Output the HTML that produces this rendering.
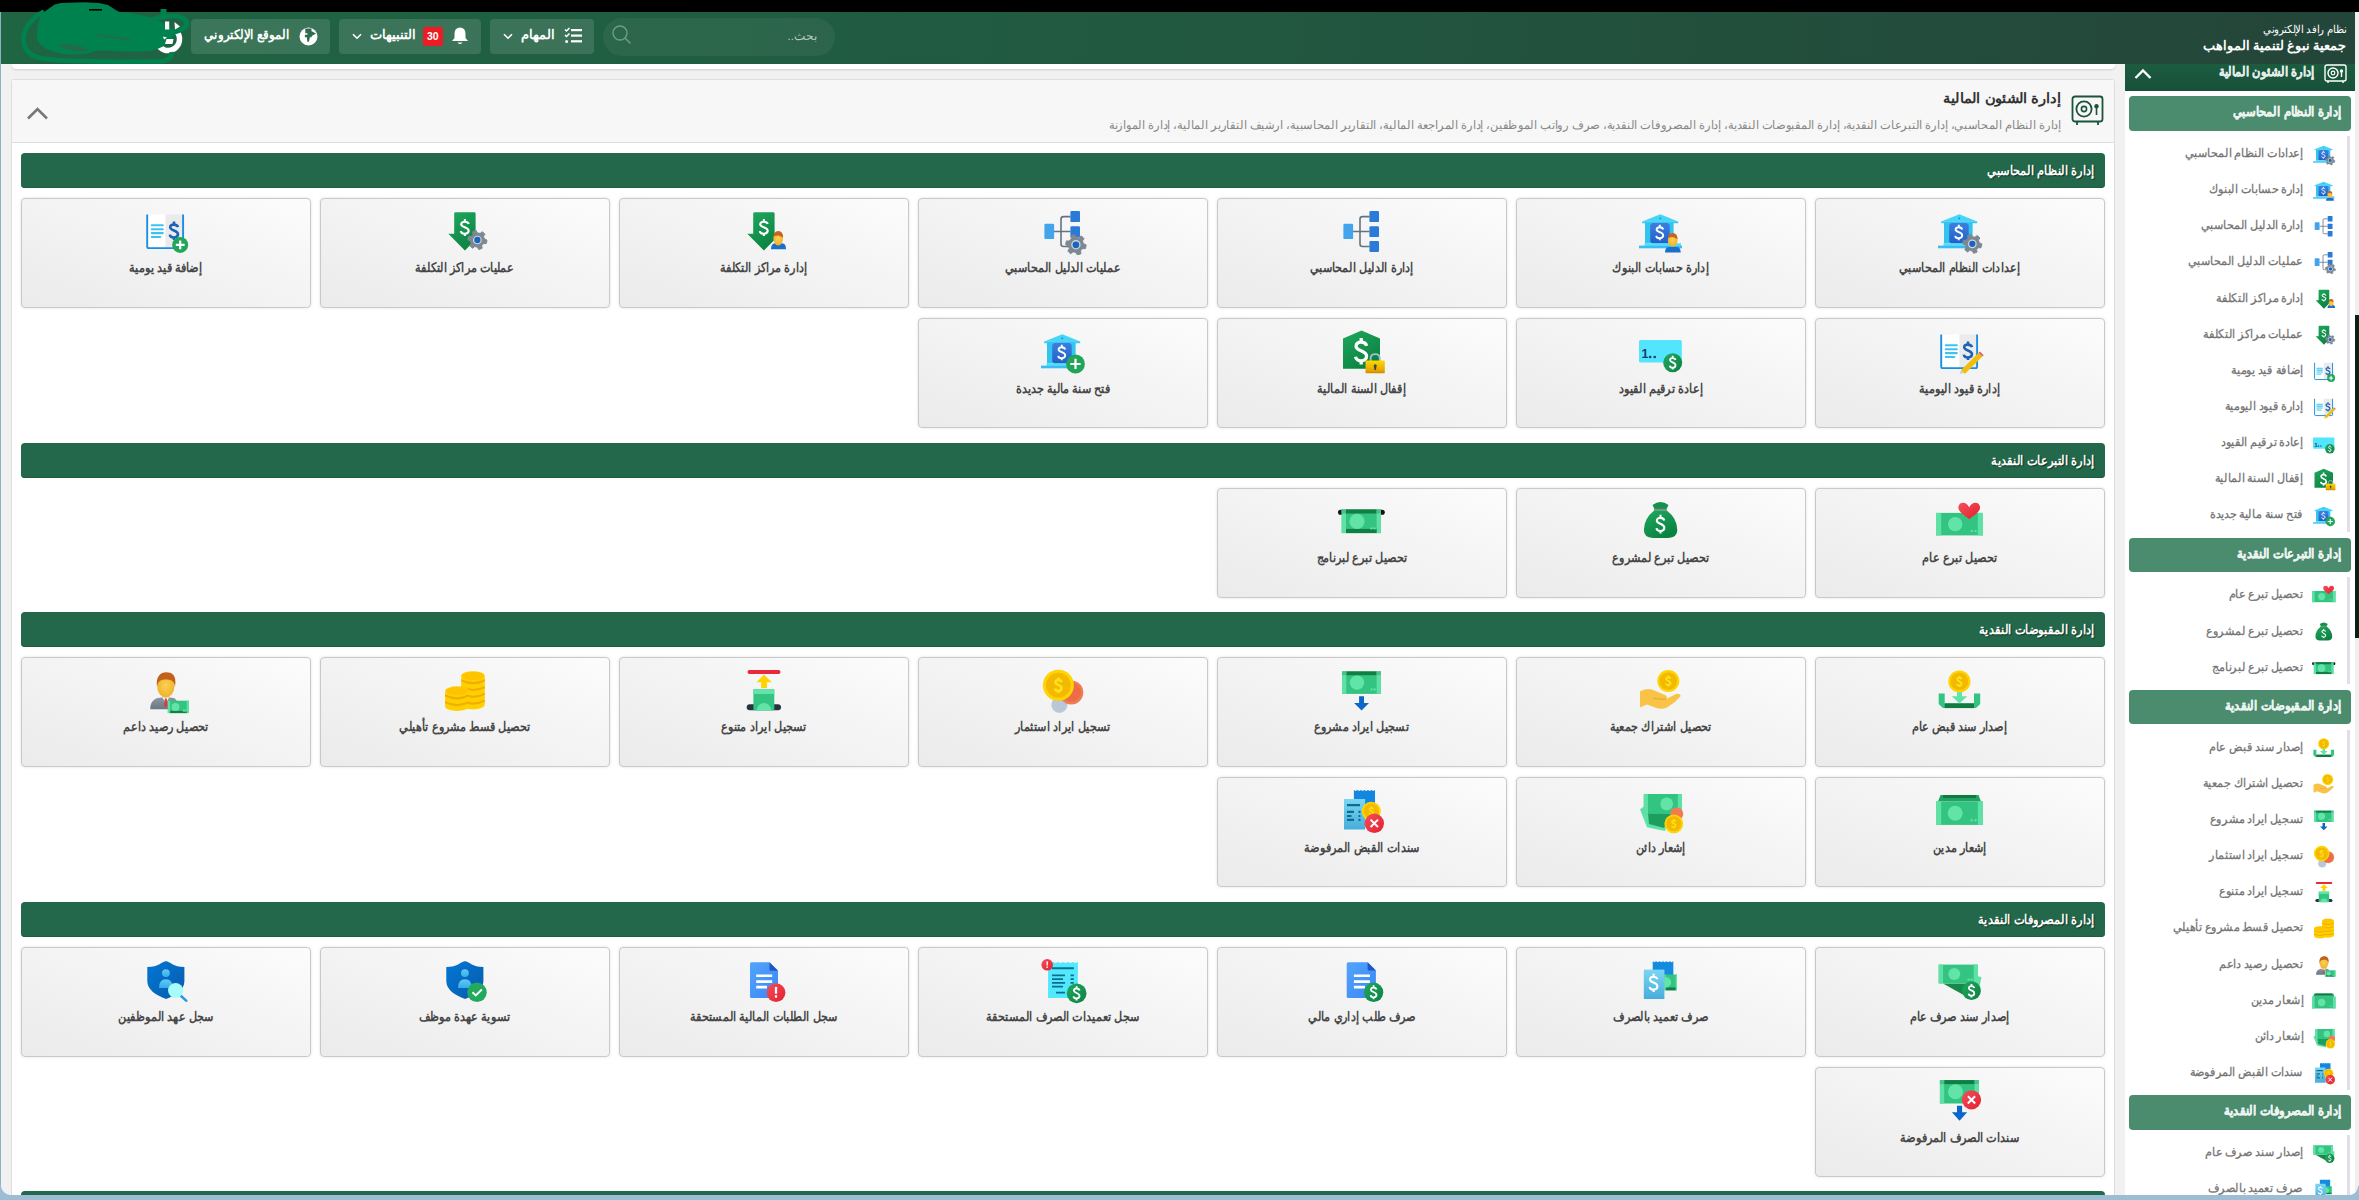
<!DOCTYPE html><html lang="ar"><head><meta charset="utf-8"><title>rafed</title><style>*{box-sizing:border-box;margin:0;padding:0}
html,body{width:2359px;height:1200px;overflow:hidden;background:#f1f1f1;font-family:"Liberation Sans", sans-serif;position:relative}
#root{position:relative;width:2359px;height:1200px;overflow:hidden}
.abs{position:absolute}
#topblack{left:0;top:0;width:2359px;height:12px;background:#000}
#lline{left:0;top:12px;width:1px;height:1188px;background:#8fb0c6}
#bstrip{left:0;top:1195px;width:2359px;height:5px;background:#9cbdd4}
#rstrip{left:2355px;top:12px;width:4px;height:1183px;background:#efefef}
#thumb{left:2355px;top:314.5px;width:4px;height:323px;background:#0b1f12}
#hdr{left:1px;top:12px;width:2354px;height:51.6px;background:linear-gradient(to right,#1f6542 0%,#215a41 45%,#244539 100%)}
.hbtn{position:absolute;top:18.9px;height:35px;border-radius:4px;background:rgba(255,255,255,0.12);color:#fff;font-size:13px;font-weight:bold;direction:rtl}
.hbtn span{position:absolute;white-space:nowrap}
#search{left:603px;top:18px;width:232px;height:38px;border-radius:19px;background:rgba(255,255,255,0.05)}
#search .ph{position:absolute;right:18px;top:11px;color:#b9cbbf;font-size:11.5px;direction:rtl}
#search .mag{position:absolute;left:9px;top:7.2px;width:20px;height:20px}
#topcard{left:11.5px;top:63.6px;width:2103px;height:5.7px;background:#fff;border-radius:0 0 4px 4px;box-shadow:0 1px 2px rgba(0,0,0,0.15)}
#panel{left:11.3px;top:79.4px;width:2103.3px;height:1125px;background:#fff;border:1px solid #dedede;border-radius:3px}
#phead{left:12.3px;top:80.4px;width:2101.3px;height:63px;background:#f7f7f7;border-bottom:1px solid #dedede}
.ptitle{right:298px;top:90px;color:#333;font-size:14px;font-weight:bold;direction:rtl;white-space:nowrap;transform:scaleX(1.046);transform-origin:right center}
.pdesc{right:298px;top:117.7px;color:#888;font-size:12px;direction:rtl;white-space:nowrap;transform:scaleX(.955);transform-origin:right center}
.bar{position:absolute;left:21px;width:2084px;height:35.3px;border-radius:4px;background:#23684a;box-shadow:inset 0 -1px 0 #1c5e3e}
.bar span{position:absolute;right:10px;top:10px;color:#fff;font-weight:bold;font-size:12.5px;white-space:nowrap;direction:rtl;text-shadow:1px 1px 1px rgba(0,0,0,0.5);transform:scaleX(.878);transform-origin:right center}
.card{position:absolute;width:289.5px;height:110.2px;border:1px solid #c9c9c9;border-radius:4px;background:linear-gradient(to top right,#ebebeb 0%,#f3f3f3 50%,#fcfcfc 100%);box-shadow:0 0 3px rgba(0,0,0,0.12)}
.card svg{position:absolute;left:119.75px;top:8px;width:48px;height:48px;overflow:visible}
.card span{position:absolute;left:0;right:0;top:61.5px;text-align:center;color:#474747;font-weight:bold;font-size:12.5px;white-space:nowrap;direction:rtl;transform:scaleX(.862)}
#side{left:2124.75px;top:63.6px;width:230.25px;height:1136.4px;background:#fff}
#stitle{left:2124.75px;top:63.6px;width:230.25px;height:27px;background:linear-gradient(to bottom,#1c5c3f,#17503a)}
#stitle span{position:absolute;right:40px;top:0.5px;color:#e6eeea;-webkit-text-stroke:0.3px #e6eeea;font-weight:bold;font-size:12.5px;white-space:nowrap;direction:rtl;transform:scaleX(.876);transform-origin:right center}
.sbtn{position:absolute;left:2128.5px;width:222px;height:34.6px;border-radius:4px;background:#4b8c6e}
.sbtn span{position:absolute;right:9px;top:8px;color:#eef4f0;-webkit-text-stroke:0.3px #eef4f0;font-weight:bold;font-size:12.5px;white-space:nowrap;direction:rtl;transform:scaleX(.89);transform-origin:right center}
.sline{position:absolute;left:2347px;width:3px;background:#e3dce9}
.sitem{position:absolute;left:2140px;width:200px;height:24px}
.sitem svg{position:absolute;left:172px;top:0;width:24px;height:24px}
.sitem span{position:absolute;right:37px;top:4px;color:#727272;font-size:12px;white-space:nowrap;direction:rtl;-webkit-text-stroke:0.25px #727272;transform:scaleX(.93);transform-origin:right center}
</style></head><body><svg width="0" height="0" style="position:absolute;left:0;top:0"><defs>
<linearGradient id="gGreen" x1="0" y1="0" x2="1" y2="1"><stop offset="0" stop-color="#21a95f"/><stop offset="1" stop-color="#0b8043"/></linearGradient>
<linearGradient id="gArrow" x1="0" y1="0" x2="0.6" y2="1"><stop offset="0" stop-color="#21a85e"/><stop offset="1" stop-color="#0a8240"/></linearGradient>
<linearGradient id="gBankBody" x1="0" y1="0" x2="0" y2="1"><stop offset="0" stop-color="#3c7fe0"/><stop offset="1" stop-color="#2260c8"/></linearGradient>
<linearGradient id="gDoc" x1="0" y1="0" x2="1" y2="1"><stop offset="0" stop-color="#53a4fb"/><stop offset="1" stop-color="#3a86f6"/></linearGradient>
<linearGradient id="gRed" x1="0" y1="0" x2="1" y2="1"><stop offset="0" stop-color="#f44f5a"/><stop offset="1" stop-color="#e3202f"/></linearGradient>
<linearGradient id="gShield" x1="0" y1="0" x2="1" y2="1"><stop offset="0" stop-color="#0078d4"/><stop offset="1" stop-color="#0a5aad"/></linearGradient>
<linearGradient id="gPerson" x1="0" y1="0" x2="0" y2="1"><stop offset="0" stop-color="#66c8f6"/><stop offset="1" stop-color="#32aee8"/></linearGradient>
<linearGradient id="gRcpt" x1="0" y1="0" x2="0" y2="1"><stop offset="0" stop-color="#7cd6f2"/><stop offset="1" stop-color="#47addb"/></linearGradient>
<linearGradient id="gLock" x1="0" y1="0" x2="0" y2="1"><stop offset="0" stop-color="#ffd800"/><stop offset="0.75" stop-color="#e7a800"/><stop offset="1" stop-color="#c98c00"/></linearGradient>
<radialGradient id="gHead" cx="0.5" cy="0.45" r="0.6"><stop offset="0" stop-color="#fcd050"/><stop offset="1" stop-color="#eeb02a"/></radialGradient>
<linearGradient id="gSuit" x1="0" y1="0" x2="0" y2="1"><stop offset="0" stop-color="#8b98a4"/><stop offset="1" stop-color="#6b7884"/></linearGradient>
</defs><symbol id="i_bankgear" viewBox="0 0 48 48"><path d="M23.3 7.3 L5.2 14.6 H41.2 Z" fill="#44d6f8"/><rect x="5.2" y="14.4" width="36" height="1.8" fill="#35c6f2"/><circle cx="23.3" cy="11.3" r="0.9" fill="#1a86c8"/><rect x="8" y="16" width="28.6" height="20.5" fill="#33c3ef"/><path d="M15.2 16 H30.7 L32.7 18 V34.5 L30.7 36.5 H15.2 L13.2 34.5 V18 Z" fill="url(#gBankBody)"/><path d="M26.20 22.45 C25.52 19.82 19.57 19.35 19.57 22.61 C19.57 25.55 26.20 24.93 26.20 28.34 C26.20 32.06 19.74 32.06 19.23 28.80 M22.80 17.80 V19.82 M22.80 31.29 V33.30" fill="none" stroke="#fff" stroke-width="1.90"/><rect x="7.5" y="36.3" width="36.5" height="2.6" fill="#4fe0fc"/><rect x="2" y="38.6" width="43" height="2.7" fill="#3bbdf0"/><path d="M45.72 38.03 L45.48 39.25 L45.08 40.43 L42.39 40.31 L41.88 41.07 L41.28 41.77 L40.58 42.37 L41.06 45.02 L39.94 45.57 L38.77 45.97 L37.55 46.22 L36.31 43.83 L35.39 43.77 L34.49 43.59 L33.62 43.30 L31.56 45.03 L30.52 44.34 L29.59 43.52 L28.77 42.59 L30.22 40.32 L29.81 39.50 L29.51 38.63 L29.33 37.72 L26.80 36.81 L26.88 35.57 L27.12 34.35 L27.52 33.17 L30.21 33.29 L30.72 32.53 L31.32 31.83 L32.02 31.23 L31.54 28.58 L32.66 28.03 L33.83 27.63 L35.05 27.38 L36.29 29.77 L37.21 29.83 L38.11 30.01 L38.98 30.30 L41.04 28.57 L42.08 29.26 L43.01 30.08 L43.83 31.01 L42.38 33.28 L42.79 34.10 L43.09 34.97 L43.27 35.88 L45.80 36.79Z" fill="#7d8893" stroke="#7d8893" stroke-width="1" stroke-linejoin="round"/><circle cx="36.30" cy="36.80" r="4.37" fill="#cfd5da"/><circle cx="36.30" cy="36.80" r="3.14" fill="#1864bf"/></symbol><symbol id="i_bankuser" viewBox="0 0 48 48"><path d="M23.3 7.3 L5.2 14.6 H41.2 Z" fill="#44d6f8"/><rect x="5.2" y="14.4" width="36" height="1.8" fill="#35c6f2"/><circle cx="23.3" cy="11.3" r="0.9" fill="#1a86c8"/><rect x="8" y="16" width="28.6" height="20.5" fill="#33c3ef"/><path d="M15.2 16 H30.7 L32.7 18 V34.5 L30.7 36.5 H15.2 L13.2 34.5 V18 Z" fill="url(#gBankBody)"/><path d="M26.20 22.45 C25.52 19.82 19.57 19.35 19.57 22.61 C19.57 25.55 26.20 24.93 26.20 28.34 C26.20 32.06 19.74 32.06 19.23 28.80 M22.80 17.80 V19.82 M22.80 31.29 V33.30" fill="none" stroke="#fff" stroke-width="1.90"/><rect x="7.5" y="36.3" width="36.5" height="2.6" fill="#4fe0fc"/><rect x="2" y="38.6" width="43" height="2.7" fill="#3bbdf0"/><path d="M28.0 45.6 q0 -5.7 4.0 -5.7 h7.7 q4.0 0 4.0 5.7 z" fill="#1a6fcb"/><ellipse cx="35.7" cy="33.2" rx="4.8" ry="6.6" fill="url(#gHead)"/><path d="M30.9 32.2 q0 -6.3 4.8 -6.3 q4.8 0 4.8 6.3 q-4.3 -2.2 -4.3 -2.2 q-5.3 0 -5.3 2.2z" fill="#c6651e"/></symbol><symbol id="i_bankplus" viewBox="0 0 48 48"><path d="M23.3 7.3 L5.2 14.6 H41.2 Z" fill="#44d6f8"/><rect x="5.2" y="14.4" width="36" height="1.8" fill="#35c6f2"/><circle cx="23.3" cy="11.3" r="0.9" fill="#1a86c8"/><rect x="8" y="16" width="28.6" height="20.5" fill="#33c3ef"/><path d="M15.2 16 H30.7 L32.7 18 V34.5 L30.7 36.5 H15.2 L13.2 34.5 V18 Z" fill="url(#gBankBody)"/><path d="M26.20 22.45 C25.52 19.82 19.57 19.35 19.57 22.61 C19.57 25.55 26.20 24.93 26.20 28.34 C26.20 32.06 19.74 32.06 19.23 28.80 M22.80 17.80 V19.82 M22.80 31.29 V33.30" fill="none" stroke="#fff" stroke-width="1.90"/><rect x="7.5" y="36.3" width="36.5" height="2.6" fill="#4fe0fc"/><rect x="2" y="38.6" width="43" height="2.7" fill="#3bbdf0"/><circle cx="36.5" cy="37.0" r="9.4" fill="#21a559"/><path d="M31.3 37.0 h10.3 M36.5 31.8 v10.3" stroke="#fff" stroke-width="2.2"/></symbol><symbol id="i_tree" viewBox="0 0 48 48"><path d="M15 24.5 H31.5 M31.5 9.6 H24.5 q-2.5 0 -2.5 2.5 V37 q0 2.5 2.5 2.5 H31.5" fill="none" stroke="#66737f" stroke-width="1.6"/><rect x="5.4" y="16.7" width="9.7" height="15.4" rx="1.2" fill="#42a4ec"/><rect x="31.4" y="3.9" width="9.6" height="11.2" rx="1.2" fill="#2b7ad8"/><rect x="31.4" y="19.3" width="9.6" height="10.8" rx="1.2" fill="#2b7ad8"/><rect x="31.4" y="33.9" width="9.6" height="11" rx="1.2" fill="#2b7ad8"/></symbol><symbol id="i_treegear" viewBox="0 0 48 48"><path d="M15 24.5 H31.5 M31.5 9.6 H24.5 q-2.5 0 -2.5 2.5 V37 q0 2.5 2.5 2.5 H31.5" fill="none" stroke="#66737f" stroke-width="1.6"/><rect x="5.4" y="16.7" width="9.7" height="15.4" rx="1.2" fill="#42a4ec"/><rect x="31.4" y="3.9" width="9.6" height="11.2" rx="1.2" fill="#2b7ad8"/><rect x="31.4" y="19.3" width="9.6" height="10.8" rx="1.2" fill="#2b7ad8"/><rect x="31.4" y="33.9" width="9.6" height="11" rx="1.2" fill="#2b7ad8"/><path d="M47.01 39.12 L46.75 40.43 L46.33 41.69 L43.44 41.57 L42.89 42.39 L42.24 43.13 L41.50 43.78 L42.01 46.63 L40.81 47.22 L39.55 47.65 L38.24 47.91 L36.91 45.35 L35.92 45.28 L34.95 45.09 L34.02 44.78 L31.81 46.64 L30.70 45.90 L29.69 45.02 L28.81 44.02 L30.37 41.58 L29.93 40.69 L29.61 39.76 L29.42 38.79 L26.70 37.81 L26.79 36.48 L27.05 35.17 L27.47 33.91 L30.36 34.03 L30.91 33.21 L31.56 32.47 L32.30 31.82 L31.79 28.97 L32.99 28.38 L34.25 27.95 L35.56 27.69 L36.89 30.25 L37.88 30.32 L38.85 30.51 L39.78 30.82 L41.99 28.96 L43.10 29.70 L44.11 30.58 L44.99 31.58 L43.43 34.02 L43.87 34.91 L44.19 35.84 L44.38 36.81 L47.10 37.79Z" fill="#7d8893" stroke="#7d8893" stroke-width="1" stroke-linejoin="round"/><circle cx="36.90" cy="37.80" r="4.69" fill="#cfd5da"/><circle cx="36.90" cy="37.80" r="3.37" fill="#1864bf"/></symbol><symbol id="i_arrowgear" viewBox="0 0 48 48"><path d="M14.5 5.3 H33.3 q1.3 0 1.3 1.3 V26.7 H40.5 L23.9 43.5 L7.3 26.7 H13.2 V6.6 q0 -1.3 1.3 -1.3 Z" fill="url(#gArrow)"/><path d="M27.73 17.06 C26.95 14.14 20.16 13.62 20.16 17.23 C20.16 20.50 27.73 19.81 27.73 23.60 C27.73 27.72 20.36 27.72 19.78 24.11 M23.85 11.90 V14.14 M23.85 26.86 V29.10" fill="none" stroke="#fff" stroke-width="2.10"/><path d="M45.82 34.23 L45.58 35.45 L45.18 36.63 L42.49 36.51 L41.98 37.27 L41.38 37.97 L40.68 38.57 L41.16 41.22 L40.04 41.77 L38.87 42.17 L37.65 42.42 L36.41 40.03 L35.49 39.97 L34.59 39.79 L33.72 39.50 L31.66 41.23 L30.62 40.54 L29.69 39.72 L28.87 38.79 L30.32 36.52 L29.91 35.70 L29.61 34.83 L29.43 33.92 L26.90 33.01 L26.98 31.77 L27.22 30.55 L27.62 29.37 L30.31 29.49 L30.82 28.73 L31.42 28.03 L32.12 27.43 L31.64 24.78 L32.76 24.23 L33.93 23.83 L35.15 23.58 L36.39 25.97 L37.31 26.03 L38.21 26.21 L39.08 26.50 L41.14 24.77 L42.18 25.46 L43.11 26.28 L43.93 27.21 L42.48 29.48 L42.89 30.30 L43.19 31.17 L43.37 32.08 L45.90 32.99Z" fill="#7d8893" stroke="#7d8893" stroke-width="1" stroke-linejoin="round"/><circle cx="36.40" cy="33.00" r="4.37" fill="#cfd5da"/><circle cx="36.40" cy="33.00" r="3.14" fill="#1864bf"/></symbol><symbol id="i_arrowuser" viewBox="0 0 48 48"><path d="M14.5 5.3 H33.3 q1.3 0 1.3 1.3 V26.7 H40.5 L23.9 43.5 L7.3 26.7 H13.2 V6.6 q0 -1.3 1.3 -1.3 Z" fill="url(#gArrow)"/><path d="M27.73 17.06 C26.95 14.14 20.16 13.62 20.16 17.23 C20.16 20.50 27.73 19.81 27.73 23.60 C27.73 27.72 20.36 27.72 19.78 24.11 M23.85 11.90 V14.14 M23.85 26.86 V29.10" fill="none" stroke="#fff" stroke-width="2.10"/><path d="M31.0 42.2 q0 -6.0 4.0 -6.0 h7.0 q4.0 0 4.0 6.0 z" fill="#1a6fcb"/><ellipse cx="38.2" cy="31.6" rx="4.8" ry="6.8" fill="url(#gHead)"/><path d="M33.5 30.6 q0 -6.5 4.8 -6.5 q4.8 0 4.8 6.5 q-4.3 -2.2 -4.3 -2.2 q-5.3 0 -5.3 2.2z" fill="#c6651e"/></symbol><symbol id="i_ledgerplus" viewBox="0 0 48 48"><rect x="5" y="7.5" width="18.5" height="33" fill="#fff"/><rect x="23.5" y="7.5" width="17.5" height="33" fill="#ebebeb"/><path d="M5.2 7.5 V39.5 q0 1.6 1.6 1.6 H39.5 q1.6 0 1.6 -1.6 V7.5" fill="none" stroke="#1b8de3" stroke-width="1.9"/><path d="M9.8 18.3 H20.8 M9.8 22.2 H20.8 M9.8 26.1 H20.8 M9.8 30 H18.3" stroke="#3cc3f0" stroke-width="2.1" stroke-linecap="round"/><path d="M36.00 20.12 C35.20 16.99 28.20 16.44 28.20 20.30 C28.20 23.80 36.00 23.06 36.00 27.11 C36.00 31.53 28.40 31.53 27.80 27.66 M32.00 14.60 V16.99 M32.00 30.61 V33.00" fill="none" stroke="#1d63b5" stroke-width="2.60"/><circle cx="38.2" cy="37.9" r="8.0" fill="#21a559"/><path d="M33.8 37.9 h8.8 M38.2 33.5 v8.8" stroke="#fff" stroke-width="2.2"/></symbol><symbol id="i_ledgerpen" viewBox="0 0 48 48"><rect x="5" y="7.5" width="18.5" height="33" fill="#fff"/><rect x="23.5" y="7.5" width="17.5" height="33" fill="#ebebeb"/><path d="M5.2 7.5 V39.5 q0 1.6 1.6 1.6 H39.5 q1.6 0 1.6 -1.6 V7.5" fill="none" stroke="#1b8de3" stroke-width="1.9"/><path d="M9.8 18.3 H20.8 M9.8 22.2 H20.8 M9.8 26.1 H20.8 M9.8 30 H18.3" stroke="#3cc3f0" stroke-width="2.1" stroke-linecap="round"/><path d="M36.00 20.12 C35.20 16.99 28.20 16.44 28.20 20.30 C28.20 23.80 36.00 23.06 36.00 27.11 C36.00 31.53 28.40 31.53 27.80 27.66 M32.00 14.60 V16.99 M32.00 30.61 V33.00" fill="none" stroke="#1d63b5" stroke-width="2.60"/><path d="M25 43.2 L42.5 25.8 L46.3 29.6 L28.8 47 Z" fill="#efbe0e"/><path d="M42.5 25.8 l1.4 -1.4 3.8 3.8 -1.4 1.4z" fill="#d9606a"/><path d="M25 43.2 l-1.3 3.9 3.9 -1.3z" fill="#c9c9c9"/></symbol><symbol id="i_renum" viewBox="0 0 48 48"><rect x="2" y="13" width="42.8" height="22.5" rx="1.6" fill="#52e5fd"/><text x="4.6" y="31" font-family="Liberation Sans" font-weight="bold" font-size="12.5" fill="#133f6e">1</text><circle cx="13.2" cy="30" r="1.3" fill="#133f6e"/><circle cx="17.7" cy="30" r="1.3" fill="#133f6e"/><circle cx="35.7" cy="35.7" r="9.5" fill="url(#gGreen)"/><path d="M38.51 32.96 C37.95 30.64 33.03 30.23 33.03 33.10 C33.03 35.70 38.51 35.15 38.51 38.16 C38.51 41.45 33.17 41.45 32.75 38.57 M35.70 28.86 V30.64 M35.70 40.76 V42.54" fill="none" stroke="#fff" stroke-width="1.80"/></symbol><symbol id="i_lock" viewBox="0 0 48 48"><path d="M5 11.4 L23.5 3.6 L42 11.4 V41.7 H5 Z" fill="url(#gArrow)"/><path d="M28.60 18.88 C27.52 14.36 18.07 13.56 18.07 19.15 C18.07 24.20 28.60 23.14 28.60 28.99 C28.60 35.37 18.34 35.37 17.53 29.79 M23.20 10.90 V14.36 M23.20 34.04 V37.50" fill="none" stroke="#fff" stroke-width="3.30"/><path d="M32.6 34 v-2.5 q0 -4.3 4.6 -4.3 q4.6 0 4.6 4.3 v2.5" fill="none" stroke="#a9bccb" stroke-width="1.8"/><rect x="27.5" y="33.6" width="19.3" height="12.7" rx="0.8" fill="url(#gLock)"/><path d="M37.2 37.2 q1.5 0 1.5 1.5 l-0.8 4.2 h-1.4 l-0.8 -4.2 q0 -1.5 1.5 -1.5z" fill="#444"/></symbol><symbol id="i_cashheart" viewBox="0 0 48 48"><rect x="0.0" y="15.9" width="47.0" height="22.5" fill="#33c481"/><rect x="0.0" y="15.9" width="5.2" height="22.5" fill="#5fe0a5"/><rect x="41.8" y="15.9" width="5.2" height="22.5" fill="#5fe0a5"/><circle cx="19.2" cy="27.1" r="7.2" fill="#62e3a7"/><circle cx="35.7" cy="33.9" r="1.2" fill="#5fe0a5"/><circle cx="39.5" cy="33.9" r="1.2" fill="#5fe0a5"/><path d="M33.2 10.5 C 31 4.5, 23 4, 22.4 10 C 22 14.5, 28 18, 33.2 22.3 C 38.5 18, 44.5 14.5, 44 10 C 43.4 4, 35.4 4.5, 33.2 10.5 Z" fill="url(#gRed)"/></symbol><symbol id="i_bag" viewBox="0 0 48 48"><path d="M15.5 8 q4 -3 8 -3 q4 0 8 3 l-2.5 5 h-11z" fill="#16914b"/><rect x="17" y="11.8" width="12.7" height="1.9" fill="#7f8c8d"/><path d="M17.2 13.6 h12.6 q10.5 8 10.5 19.5 q0 7.8 -9 7.8 h-15.4 q-9 0 -9 -7.8 q0 -11.5 10.3 -19.5z" fill="url(#gArrow)"/><path d="M27.34 23.44 C26.57 20.24 19.85 19.68 19.85 23.63 C19.85 27.20 27.34 26.45 27.34 30.58 C27.34 35.10 20.04 35.10 19.47 31.15 M23.50 17.80 V20.24 M23.50 34.16 V36.60" fill="none" stroke="#fff" stroke-width="2.10"/></symbol><symbol id="i_cashslot" viewBox="0 0 48 48"><rect x="0" y="12.7" width="46.8" height="5.1" rx="2.55" fill="#151515"/><rect x="3.7" y="12.5" width="39.2" height="23.6" fill="#33c481"/><rect x="3.7" y="12.5" width="4.3" height="23.6" fill="#5fe0a5"/><rect x="38.6" y="12.5" width="4.3" height="23.6" fill="#5fe0a5"/><rect x="8.0" y="12.5" width="30.6" height="4.0" fill="#117e43"/><rect x="3.7" y="12.5" width="4.3" height="4.0" fill="#4cbf8c"/><rect x="38.6" y="12.5" width="4.3" height="4.0" fill="#4cbf8c"/><rect x="8.0" y="31.9" width="30.6" height="4.2" fill="#117e43"/><circle cx="19.0" cy="24.3" r="7.6" fill="#62e3a7"/><circle cx="33.5" cy="31.4" r="1.2" fill="#5fe0a5"/><circle cx="36.6" cy="31.4" r="1.2" fill="#5fe0a5"/></symbol><symbol id="i_coinin" viewBox="0 0 48 48"><circle cx="23.4" cy="15.5" r="11.1" fill="#ffd400"/><circle cx="23.4" cy="15.5" r="8.9" fill="#f2b900"/><path d="M25.62 13.28 C25.18 11.39 21.29 11.06 21.29 13.39 C21.29 15.50 25.62 15.06 25.62 17.50 C25.62 20.16 21.40 20.16 21.07 17.83 M23.40 9.95 V11.39 M23.40 19.61 V21.05" fill="none" stroke="#ffe11a" stroke-width="1.89"/><path d="M2.7 27.4 h6 v10 h29.3 v-10 h6.2 v10.5 l-4.2 4.2 h-33.1 l-4.2 -4.2z" fill="#33c481"/><rect x="8.7" y="37.3" width="29.3" height="4.8" fill="#107c41"/><path d="M21 26 h5 v4.2 h5.2 l-7.7 7.3 l-7.7 -7.3 h5.2z" fill="#62e3a7"/></symbol><symbol id="i_handcoin" viewBox="0 0 48 48"><circle cx="31.3" cy="15.0" r="11.0" fill="#ffd400"/><circle cx="31.3" cy="15.0" r="8.8" fill="#f2b900"/><path d="M33.50 12.80 C33.06 10.93 29.21 10.60 29.21 12.91 C29.21 15.00 33.50 14.56 33.50 16.98 C33.50 19.62 29.32 19.62 28.99 17.31 M31.30 9.50 V10.93 M31.30 19.07 V20.50" fill="none" stroke="#ffe11a" stroke-width="1.87"/><path d="M3 25.5 Q 10 22, 15 23.5 L 29 29.5 Q 31 31.5, 29 33 Q 33 31, 39 28 Q 43 27, 43.8 30 Q 38 37, 30 41.5 Q 24 44, 18 41.5 L 10 38.5 L 3 41.5 Z" fill="#f8c347"/><path d="M16 32 Q 23 34, 29 33" fill="none" stroke="#e0a82a" stroke-width="1"/></symbol><symbol id="i_cashdown" viewBox="0 0 48 48"><rect x="4.0" y="5.4" width="38.9" height="22.5" fill="#33c481"/><rect x="4.0" y="5.4" width="4.3" height="22.5" fill="#5fe0a5"/><rect x="38.6" y="5.4" width="4.3" height="22.5" fill="#5fe0a5"/><rect x="8.3" y="5.4" width="30.3" height="3.8" fill="#117e43"/><rect x="4.0" y="5.4" width="4.3" height="3.8" fill="#4cbf8c"/><rect x="38.6" y="5.4" width="4.3" height="3.8" fill="#4cbf8c"/><circle cx="19.0" cy="16.6" r="7.2" fill="#62e3a7"/><circle cx="33.6" cy="23.4" r="1.2" fill="#5fe0a5"/><circle cx="36.7" cy="23.4" r="1.2" fill="#5fe0a5"/><path d="M21.1 30.2 h4.9 v6.8 h5 l-7.45 7.6 l-7.45 -7.6 h5z" fill="#0b66c8"/></symbol><symbol id="i_coinsorange" viewBox="0 0 48 48"><circle cx="20.4" cy="38.9" r="8" fill="#b9c7d6"/><circle cx="32.3" cy="26.5" r="12" fill="#f27b52"/><circle cx="32.3" cy="26.5" r="9.6" fill="#ea6d48"/><circle cx="19.4" cy="19.2" r="15.5" fill="#ffd400"/><circle cx="19.4" cy="19.2" r="12.4" fill="#f2b900"/><path d="M22.50 16.10 C21.88 13.46 16.45 13.00 16.45 16.25 C16.45 19.20 22.50 18.58 22.50 21.99 C22.50 25.71 16.61 25.71 16.14 22.45 M19.40 11.45 V13.46 M19.40 24.93 V26.95" fill="none" stroke="#ffe11a" stroke-width="2.64"/></symbol><symbol id="i_redbar" viewBox="0 0 48 48"><rect x="7.5" y="4" width="33" height="4" rx="2" fill="#e9283b"/><path d="M24.05 8.6 l7.65 7.6 h-4.7 v5.9 h-5.8 v-5.9 h-4.8z" fill="#ffd300"/><rect x="6.7" y="38.2" width="34.3" height="6" rx="3" fill="#27343e"/><rect x="13.4" y="23.3" width="20.9" height="21" fill="#33c481"/><rect x="13.4" y="23.3" width="20.9" height="4.7" fill="#62e3a7"/><path d="M16.8 44.3 a7.2 7.2 0 0 1 14.4 0z" fill="#62e3a7"/></symbol><symbol id="i_coinstack" viewBox="0 0 48 48"><rect x="20.2" y="5.2" width="23.6" height="38.3" rx="11.8" ry="4.8" fill="#ffd000"/><path d="M20.2 13.2 q11.8 5.8 23.6 0 v2.2 q-11.8 5.8 -23.6 0z" fill="#f3ad00"/><path d="M20.2 20.0 q11.8 5.8 23.6 0 v2.2 q-11.8 5.8 -23.6 0z" fill="#f3ad00"/><path d="M20.2 26.8 q11.8 5.8 23.6 0 v2.2 q-11.8 5.8 -23.6 0z" fill="#f3ad00"/><path d="M20.2 33.6 q11.8 5.8 23.6 0 v2.2 q-11.8 5.8 -23.6 0z" fill="#f3ad00"/><ellipse cx="32.0" cy="10.0" rx="10.9" ry="4.1" fill="#ffc400"/><rect x="4.1" y="20.3" width="23.9" height="24.7" rx="11.9" ry="4.8" fill="#ffd000"/><path d="M4.1 28.3 q11.9 5.8 23.9 0 v2.2 q-11.9 5.8 -23.9 0z" fill="#f3ad00"/><path d="M4.1 35.1 q11.9 5.8 23.9 0 v2.2 q-11.9 5.8 -23.9 0z" fill="#f3ad00"/><ellipse cx="16.0" cy="25.1" rx="11.0" ry="4.1" fill="#ffc400"/></symbol><symbol id="i_personcash" viewBox="0 0 48 48"><path d="M8.2 43.3 C 8.2 34, 14 31.5, 20 31.5 H28 C 34 31.5, 36 34, 36 43.3 Z" fill="url(#gSuit)"/><path d="M20.5 31.5 l3.3 6 l3.3 -6z" fill="#fff"/><path d="M22.8 32.5 h2 l0.8 7 l-1.8 2 l-1.8 -2z" fill="#de3b3b"/><ellipse cx="23.8" cy="20.5" rx="8.6" ry="11" fill="url(#gHead)"/><path d="M15 21 C 13.5 10, 19 6.3, 24 6.3 C 30 6.3, 35 9, 33 21 C 32 14.5, 29 13.5, 24 13.5 C 19 13.5, 16 14.5, 15 21 Z" fill="#c2611b"/><rect x="25.8" y="34.7" width="21.1" height="12.4" fill="#33c481"/><rect x="25.8" y="34.7" width="2.3" height="12.4" fill="#5fe0a5"/><rect x="44.6" y="34.7" width="2.3" height="12.4" fill="#5fe0a5"/><rect x="28.1" y="44.9" width="16.5" height="2.2" fill="#117e43"/><circle cx="33.5" cy="40.9" r="4.0" fill="#62e3a7"/><circle cx="41.8" cy="44.6" r="1.2" fill="#5fe0a5"/><circle cx="43.5" cy="44.6" r="1.2" fill="#5fe0a5"/></symbol><symbol id="i_cash" viewBox="0 0 48 48"><path d="M2 15.5 L4.5 9.1 H42.5 L45 15.5 Z" fill="#22a366"/><path d="M7 9.1 H40 V12 H7z" fill="#0f7b3e"/><rect x="0.0" y="15.5" width="47.0" height="23.4" fill="#33c481"/><rect x="0.0" y="15.5" width="5.2" height="23.4" fill="#5fe0a5"/><rect x="41.8" y="15.5" width="5.2" height="23.4" fill="#5fe0a5"/><circle cx="19.2" cy="27.2" r="7.5" fill="#62e3a7"/><circle cx="35.7" cy="34.2" r="1.2" fill="#5fe0a5"/><circle cx="39.5" cy="34.2" r="1.2" fill="#5fe0a5"/></symbol><symbol id="i_cashcoin" viewBox="0 0 48 48"><path d="M3 23.3 L 8 20 L 34 28 L 28 45 L 10 41.2 Z" fill="#5fe0a5"/><path d="M11 27 L 34 28 L 27 42 L 12 38z" fill="#1e9e5e"/><rect x="6.8" y="8.0" width="38.2" height="19.9" fill="#33c481"/><rect x="6.8" y="8.0" width="4.2" height="19.9" fill="#5fe0a5"/><rect x="40.8" y="8.0" width="4.2" height="19.9" fill="#5fe0a5"/><circle cx="29.7" cy="17.9" r="6.4" fill="#62e3a7"/><circle cx="35.8" cy="23.9" r="1.2" fill="#5fe0a5"/><circle cx="38.9" cy="23.9" r="1.2" fill="#5fe0a5"/><circle cx="39.8" cy="27.9" r="6.5" fill="#f27b52"/><circle cx="36.8" cy="37.8" r="9.4" fill="#ffd400"/><circle cx="36.8" cy="37.8" r="7.5" fill="#f2b900"/><path d="M38.68 35.92 C38.30 34.32 35.01 34.04 35.01 36.01 C35.01 37.80 38.68 37.42 38.68 39.49 C38.68 41.75 35.11 41.75 34.83 39.77 M36.80 33.10 V34.32 M36.80 41.28 V42.50" fill="none" stroke="#ffe11a" stroke-width="1.60"/></symbol><symbol id="i_receiptx" viewBox="0 0 48 48"><path d="M15.90 4.10 l1.76 1 l1.76 -1 l1.76 1 l1.76 -1 l1.76 1 l1.76 -1 l1.76 1 l1.76 -1 l1.76 1 l1.76 -1 l1.76 1 l1.76 -1 V28.10 h-21.10 Z" fill="#1386e0"/><path d="M6 13 h21.1 v30.5 h-21.1z" fill="url(#gRcpt)"/><path d="M9 19.2 H22 M9 25.8 H16 M20.5 25.8 H22.5 M9 30 H13.5 M20.5 30 H22.5 M9 33.8 H16 M20.5 33.8 H22.5" stroke="#0e6c8e" stroke-width="2.2"/><circle cx="33.3" cy="25.2" r="9.5" fill="#ffd400"/><circle cx="33.3" cy="25.2" r="7.6" fill="#f2b900"/><path d="M35.20 23.30 C34.82 21.68 31.49 21.40 31.49 23.39 C31.49 25.20 35.20 24.82 35.20 26.91 C35.20 29.19 31.59 29.19 31.30 27.20 M33.30 20.45 V21.68 M33.30 28.71 V29.95" fill="none" stroke="#ffe11a" stroke-width="1.62"/><circle cx="36.3" cy="37.3" r="9.7" fill="url(#gRed)"/><path d="M32.6 33.6 l7.4 7.4 M40.0 33.6 l-7.4 7.4" stroke="#fff" stroke-width="2"/></symbol><symbol id="i_cashdollar" viewBox="0 0 48 48"><path d="M40 20 L45.5 21 L43 33 L37 32z" fill="#5fe0a5"/><path d="M7 27.4 L 38 27.4 L 33 42 Z" fill="#16894a"/><rect x="2.7" y="8.6" width="39.3" height="18.8" fill="#33c481"/><rect x="2.7" y="8.6" width="4.3" height="18.8" fill="#5fe0a5"/><rect x="37.7" y="8.6" width="4.3" height="18.8" fill="#5fe0a5"/><circle cx="18.3" cy="18.0" r="6.0" fill="#62e3a7"/><circle cx="32.6" cy="23.6" r="1.2" fill="#5fe0a5"/><circle cx="35.7" cy="23.6" r="1.2" fill="#5fe0a5"/><circle cx="35.5" cy="34.7" r="9.4" fill="url(#gGreen)"/><path d="M38.28 31.99 C37.73 29.69 32.86 29.29 32.86 32.13 C32.86 34.70 38.28 34.16 38.28 37.14 C38.28 40.39 33.00 40.39 32.58 37.54 M35.50 27.93 V29.69 M35.50 39.71 V41.47" fill="none" stroke="#fff" stroke-width="1.79"/></symbol><symbol id="i_receiptdollar" viewBox="0 0 48 48"><path d="M15.70 5.20 l1.72 1 l1.72 -1 l1.72 1 l1.72 -1 l1.72 1 l1.72 -1 l1.72 1 l1.72 -1 l1.72 1 l1.72 -1 l1.72 1 l1.72 -1 V25.20 h-20.60 Z" fill="#138be0"/><rect x="27.4" y="18.5" width="12.6" height="15.8" fill="#33c481"/><rect x="27.4" y="18.5" width="1.4" height="15.8" fill="#5fe0a5"/><rect x="38.6" y="18.5" width="1.4" height="15.8" fill="#5fe0a5"/><rect x="28.8" y="31.5" width="9.8" height="2.8" fill="#117e43"/><circle cx="29.0" cy="26.4" r="5.1" fill="#62e3a7"/><path d="M6.8 13.6 h20.6 v29.4 h-20.6z" fill="url(#gRcpt)"/><path d="M20.40 23.29 C19.64 20.18 12.99 19.63 12.99 23.47 C12.99 26.95 20.40 26.22 20.40 30.24 C20.40 34.64 13.18 34.64 12.61 30.79 M16.60 17.80 V20.18 M16.60 33.72 V36.10" fill="none" stroke="#fff" stroke-width="2.10"/></symbol><symbol id="i_docdollar" viewBox="0 0 48 48"><path d="M10.2 6.3 H29.6 L37.9 14.6 V40.6 q0 1.5 -1.5 1.5 H10.2 q-1.5 0 -1.5 -1.5 V7.8 q0 -1.5 1.5 -1.5z" fill="url(#gDoc)"/><path d="M29.6 6.3 L37.9 14.6 H31.1 q-1.5 0 -1.5 -1.5z" fill="#1f58c6"/><path d="M15.9 19.8 H31.9 M15.9 25.6 H31.9 M15.9 31.1 H27" stroke="#fff" stroke-width="2.6"/><circle cx="35.6" cy="36.3" r="9.7" fill="url(#gGreen)"/><path d="M38.47 33.51 C37.90 31.13 32.87 30.71 32.87 33.65 C32.87 36.30 38.47 35.74 38.47 38.81 C38.47 42.17 33.02 42.17 32.59 39.23 M35.60 29.32 V31.13 M35.60 41.47 V43.28" fill="none" stroke="#fff" stroke-width="1.84"/></symbol><symbol id="i_receiptdollar2" viewBox="0 0 48 48"><path d="M9.10 6.10 l2.48 1 l2.48 -1 l2.48 1 l2.48 -1 l2.48 1 l2.48 -1 l2.48 1 l2.48 -1 l2.48 1 l2.48 -1 l2.48 1 l2.48 -1 V42.10 h-29.80 Z" fill="#52e8fe"/><path d="M13 12.3 H34.8 M13 19.4 H26 M31.5 19.4 H34.8 M13 23.1 H24 M31.5 23.1 H34.8 M13 26.9 H26 M31.5 26.9 H34.8 M13 30.6 H24 M17 36.6 H26" stroke="#0d6d91" stroke-width="1.9"/><circle cx="8.2" cy="8.8" r="5.8" fill="url(#gRed)"/><rect x="7.50" y="5.32" width="1.39" height="4.18" fill="#fff"/><rect x="7.50" y="10.42" width="1.39" height="1.51" fill="#fff"/><circle cx="37.6" cy="37.3" r="9.9" fill="url(#gGreen)"/><path d="M40.53 34.45 C39.94 32.03 34.82 31.60 34.82 34.59 C34.82 37.30 40.53 36.73 40.53 39.87 C40.53 43.29 34.96 43.29 34.52 40.29 M37.60 30.17 V32.03 M37.60 42.57 V44.43" fill="none" stroke="#fff" stroke-width="1.88"/></symbol><symbol id="i_docalert" viewBox="0 0 48 48"><path d="M11.5 6.3 H29.5 L38 14.8 V40.6 q0 1.5 -1.5 1.5 H11.5 q-1.5 0 -1.5 -1.5 V7.8 q0 -1.5 1.5 -1.5z" fill="url(#gDoc)"/><path d="M29.5 6.3 L38 14.8 H31 q-1.5 0 -1.5 -1.5z" fill="#1f58c6"/><path d="M16.2 19.8 H32.2 M16.2 25.6 H32.2 M16.2 31.1 H27" stroke="#fff" stroke-width="2.6"/><circle cx="36.0" cy="36.6" r="9.4" fill="url(#gRed)"/><rect x="34.87" y="30.96" width="2.26" height="6.77" fill="#fff"/><rect x="34.87" y="39.23" width="2.26" height="2.44" fill="#fff"/></symbol><symbol id="i_shieldcheck" viewBox="0 0 48 48"><path d="M24 5.2 C 28 5.2, 31 11, 42.4 11 V25 C 42.4 34, 34 39, 24.1 43 C 14 39, 5.3 34, 5.3 25 V11 C 17 11, 20 5.2, 24 5.2 Z" fill="url(#gShield)"/><circle cx="23.9" cy="17.1" r="3.9" fill="url(#gPerson)"/><path d="M17 32 q0 -8.7 6.9 -8.7 q6.9 0 6.9 8.7 z" fill="url(#gPerson)"/><circle cx="36" cy="36.3" r="9.75" fill="#22a95d"/><path d="M31.5 36.3 l3.3 3.2 l6 -6" stroke="#fff" stroke-width="1.9" fill="none"/></symbol><symbol id="i_shieldsearch" viewBox="0 0 48 48"><path d="M24 5.2 C 28 5.2, 31 11, 42.4 11 V25 C 42.4 34, 34 39, 24.1 43 C 14 39, 5.3 34, 5.3 25 V11 C 17 11, 20 5.2, 24 5.2 Z" fill="url(#gShield)"/><circle cx="23.9" cy="17.1" r="3.9" fill="url(#gPerson)"/><path d="M17 32 q0 -8.7 6.9 -8.7 q6.9 0 6.9 8.7 z" fill="url(#gPerson)"/><path d="M38.5 39.5 L44.4 44.8" stroke="#1d9be0" stroke-width="2.4" stroke-linecap="round"/><circle cx="33.6" cy="34.5" r="7.6" fill="#a6fbfb"/></symbol><symbol id="i_cashx" viewBox="0 0 48 48"><rect x="3.9" y="4.1" width="39.0" height="23.4" fill="#33c481"/><rect x="3.9" y="4.1" width="4.3" height="23.4" fill="#5fe0a5"/><rect x="38.6" y="4.1" width="4.3" height="23.4" fill="#5fe0a5"/><rect x="8.2" y="4.1" width="30.4" height="4.0" fill="#117e43"/><rect x="3.9" y="4.1" width="4.3" height="4.0" fill="#4cbf8c"/><rect x="38.6" y="4.1" width="4.3" height="4.0" fill="#4cbf8c"/><circle cx="19.5" cy="15.8" r="7.5" fill="#62e3a7"/><path d="M21 29.8 h5.1 v6.4 h5.1 l-7.65 8.5 l-7.65 -8.5 h5.1z" fill="#0b66c8"/><circle cx="35.5" cy="23.8" r="9.6" fill="url(#gRed)"/><path d="M31.9 20.2 l7.3 7.3 M39.1 20.2 l-7.3 7.3" stroke="#fff" stroke-width="2"/></symbol></svg><div id="root"><div id="topblack" class="abs"></div><div id="hdr" class="abs"></div><div id="lline" class="abs"></div><div id="rstrip" class="abs"></div><div id="thumb" class="abs"></div><div id="search" class="abs"><span class="ph">بحث..</span><svg class="mag" viewBox="0 0 20 20"><circle cx="8" cy="8" r="7" fill="none" stroke="#6f9c86" stroke-width="1.4"/><path d="M13 13 L18.5 18.5" stroke="#6f9c86" stroke-width="1.5"/></svg></div><div class="hbtn" style="left:489.7px;width:104.3px"><span style="right:38.5px;top:8px">المهام</span><svg style="position:absolute;left:74px;top:7.8px;width:18px;height:17px" viewBox="0 0 18 17"><path d="M1 2.5 l1.5 1.5 l3 -3 M1 8 l1.5 1.5 l3 -3" stroke="#fff" stroke-width="1.5" fill="none"/><circle cx="2.6" cy="14.5" r="1.5" fill="#fff"/><rect x="7" y="2" width="11" height="2.2" fill="#fff"/><rect x="7" y="7.5" width="11" height="2.2" fill="#fff"/><rect x="7" y="13.2" width="11" height="2.2" fill="#fff"/></svg><svg style="position:absolute;left:13px;top:14px;width:10px;height:7px" viewBox="0 0 10 7"><path d="M1 1.2 L5 5.2 L9 1.2" stroke="#fff" stroke-width="1.6" fill="none"/></svg></div><div class="hbtn" style="left:339px;width:141.5px"><span style="right:65px;top:8px">التنبيهات</span><div style="position:absolute;left:84px;top:8.1px;width:19.7px;height:18.6px;background:#ec1c24;border-radius:2px;color:#fff;font-size:10.5px;font-weight:bold;text-align:center;line-height:18.6px;direction:ltr">30</div><svg style="position:absolute;left:112px;top:7px;width:18px;height:20px" viewBox="0 0 18 20"><path d="M9 1.5 q5.5 0 5.5 6.5 v4 l2.5 3 h-16 l2.5 -3 v-4 q0 -6.5 5.5 -6.5z" fill="#fff"/><path d="M6.5 16.5 q2.5 3 5 0z" fill="#fff"/></svg><svg style="position:absolute;left:13px;top:14px;width:10px;height:7px" viewBox="0 0 10 7"><path d="M1 1.2 L5 5.2 L9 1.2" stroke="#fff" stroke-width="1.6" fill="none"/></svg></div><div class="hbtn" style="left:191.2px;width:138.8px"><span style="right:40px;top:8px;transform:scaleX(.91);transform-origin:right center">الموقع الإلكتروني</span><svg style="position:absolute;left:108px;top:8px;width:19px;height:19px" viewBox="0 0 19 19"><circle cx="9.5" cy="9.5" r="9" fill="#fff"/><path d="M6.3 1.6 h6.2 v2.6 l4.6 2.3 l-4.4 2.6 v1.2 h-1.8 l-1 4.4 h-1.5 l-0.6 -4.4 h-1.9 v-2.6 h2.6 v-1.4 h-2.2z" fill="#2e6b4e"/></svg></div><svg class="abs" style="left:0;top:0;width:200px;height:70px" viewBox="0 0 200 70"><path d="M176.8 31.6 A 11.5 11.5 0 1 1 157.2 42.9" fill="none" stroke="#fff" stroke-width="5.5"/><path d="M44 12 L54.7 4.5 L60.8 3 L83.7 2.3 L99 3 L108 5 L116.5 10.5 L122 13 Z" fill="#00824f"/><rect x="89" y="9" width="13" height="1.6" fill="#000"/><path d="M44 12 L122 12 C 140 14, 150 17, 160 21 L 176 31 C 172 42, 162 49, 150 51 C 125 53, 105 49, 95 51 C 88 55, 68 56, 55 52 C 42 48, 36 42, 37 35 C 37 25, 40 15, 44 12 Z" fill="#00824f"/><path d="M57 44.5 C 70 43.5, 84 46, 89 51 C 79 52.5, 64 50.5, 57 44.5 Z" fill="#236a4b"/><path d="M97 35 L130 39.5" stroke="#236a4b" stroke-width="2"/><path d="M44 11.5 C 33 17, 24 27, 23.5 38 C 23 50, 30 57, 45 59 C 70 61.5, 120 62, 158 61.5 C 168 61, 172 58, 171.5 52" fill="none" stroke="#00824f" stroke-width="4.6"/><path d="M152 20 C 165 15, 182 14, 186.5 21.5 C 189 28, 178 32, 166 33.5" fill="none" stroke="#00824f" stroke-width="5"/><path d="M163.5 9 v10" stroke="#00824f" stroke-width="6"/><rect x="165" y="21.5" width="4.2" height="8" fill="#fff"/><path d="M174.5 22 l5.5 4.5 l-5 3z" fill="#fff"/><path d="M163 36.5 l4 1 l-3 2z" fill="#fff"/><path d="M166.5 39 h7 l-1 5 h-7.5z" fill="#fff"/></svg><div class="abs" style="right:12.6px;top:22.5px;color:#fff;font-size:10.5px;direction:rtl;white-space:nowrap;transform:scaleX(.92);transform-origin:right center">نظام رافد الإلكتروني</div><div class="abs" style="right:12.8px;top:38px;color:#fff;font-size:13px;font-weight:bold;direction:rtl;white-space:nowrap;transform:scaleX(.985);transform-origin:right center">جمعية نبوغ لتنمية المواهب</div><div id="topcard" class="abs"></div><div id="panel" class="abs"></div><div id="phead" class="abs"></div><svg class="abs" style="left:26px;top:106px;width:23px;height:15px" viewBox="0 0 23 15"><path d="M2 12.5 L11.5 3 L21 12.5" stroke="#777" stroke-width="2.6" fill="none"/></svg><div class="abs ptitle">إدارة الشئون المالية</div><div class="abs pdesc">إدارة النظام المحاسبي، إدارة التبرعات النقدية، إدارة المقبوضات النقدية، إدارة المصروفات النقدية، صرف رواتب الموظفين، إدارة المراجعة المالية، التقارير المحاسبية، ارشيف التقارير المالية، إدارة الموازنة</div><svg class="abs" style="left:2071px;top:95px;width:33px;height:31px" viewBox="0 0 33 31"><rect x="1.5" y="1.5" width="30" height="25" rx="2.5" fill="none" stroke="#1b533b" stroke-width="1.8"/><circle cx="13" cy="14" r="7.6" fill="none" stroke="#1b533b" stroke-width="1.8"/><circle cx="13" cy="14" r="2.6" fill="none" stroke="#1b533b" stroke-width="1.6"/><circle cx="25.5" cy="11.3" r="2.2" fill="#1b533b"/><rect x="24.7" y="12" width="1.6" height="8" fill="#1b533b"/><path d="M6 27 v3 M27 27 v3" stroke="#1b533b" stroke-width="1.8"/></svg><div class="bar" style="top:153.0px"><span>إدارة النظام المحاسبي</span></div><div class="card" style="left:1815.20px;top:197.7px"><svg><use href="#i_bankgear"/></svg><span>إعدادات النظام المحاسبي</span></div><div class="card" style="left:1516.20px;top:197.7px"><svg><use href="#i_bankuser"/></svg><span>إدارة حسابات البنوك</span></div><div class="card" style="left:1217.20px;top:197.7px"><svg><use href="#i_tree"/></svg><span>إدارة الدليل المحاسبي</span></div><div class="card" style="left:918.20px;top:197.7px"><svg><use href="#i_treegear"/></svg><span>عمليات الدليل المحاسبي</span></div><div class="card" style="left:619.20px;top:197.7px"><svg><use href="#i_arrowuser"/></svg><span>إدارة مراكز التكلفة</span></div><div class="card" style="left:320.20px;top:197.7px"><svg><use href="#i_arrowgear"/></svg><span>عمليات مراكز التكلفة</span></div><div class="card" style="left:21.20px;top:197.7px"><svg><use href="#i_ledgerplus"/></svg><span>إضافة قيد يومية</span></div><div class="card" style="left:1815.20px;top:318.2px"><svg><use href="#i_ledgerpen"/></svg><span>إدارة قيود اليومية</span></div><div class="card" style="left:1516.20px;top:318.2px"><svg><use href="#i_renum"/></svg><span>إعادة ترقيم القيود</span></div><div class="card" style="left:1217.20px;top:318.2px"><svg><use href="#i_lock"/></svg><span>إقفال السنة المالية</span></div><div class="card" style="left:918.20px;top:318.2px"><svg><use href="#i_bankplus"/></svg><span>فتح سنة مالية جديدة</span></div><div class="bar" style="top:443.0px"><span>إدارة التبرعات النقدية</span></div><div class="card" style="left:1815.20px;top:487.7px"><svg><use href="#i_cashheart"/></svg><span>تحصيل تبرع عام</span></div><div class="card" style="left:1516.20px;top:487.7px"><svg><use href="#i_bag"/></svg><span>تحصيل تبرع لمشروع</span></div><div class="card" style="left:1217.20px;top:487.7px"><svg><use href="#i_cashslot"/></svg><span>تحصيل تبرع لبرنامج</span></div><div class="bar" style="top:612.0px"><span>إدارة المقبوضات النقدية</span></div><div class="card" style="left:1815.20px;top:656.7px"><svg><use href="#i_coinin"/></svg><span>إصدار سند قبض عام</span></div><div class="card" style="left:1516.20px;top:656.7px"><svg><use href="#i_handcoin"/></svg><span>تحصيل اشتراك جمعية</span></div><div class="card" style="left:1217.20px;top:656.7px"><svg><use href="#i_cashdown"/></svg><span>تسجيل ايراد مشروع</span></div><div class="card" style="left:918.20px;top:656.7px"><svg><use href="#i_coinsorange"/></svg><span>تسجيل ايراد استثمار</span></div><div class="card" style="left:619.20px;top:656.7px"><svg><use href="#i_redbar"/></svg><span>تسجيل ايراد متنوع</span></div><div class="card" style="left:320.20px;top:656.7px"><svg><use href="#i_coinstack"/></svg><span>تحصيل قسط مشروع تأهيلي</span></div><div class="card" style="left:21.20px;top:656.7px"><svg><use href="#i_personcash"/></svg><span>تحصيل رصيد داعم</span></div><div class="card" style="left:1815.20px;top:777.2px"><svg><use href="#i_cash"/></svg><span>إشعار مدين</span></div><div class="card" style="left:1516.20px;top:777.2px"><svg><use href="#i_cashcoin"/></svg><span>إشعار دائن</span></div><div class="card" style="left:1217.20px;top:777.2px"><svg><use href="#i_receiptx"/></svg><span>سندات القبض المرفوضة</span></div><div class="bar" style="top:902.0px"><span>إدارة المصروفات النقدية</span></div><div class="card" style="left:1815.20px;top:946.7px"><svg><use href="#i_cashdollar"/></svg><span>إصدار سند صرف عام</span></div><div class="card" style="left:1516.20px;top:946.7px"><svg><use href="#i_receiptdollar"/></svg><span>صرف تعميد بالصرف</span></div><div class="card" style="left:1217.20px;top:946.7px"><svg><use href="#i_docdollar"/></svg><span>صرف طلب إداري مالي</span></div><div class="card" style="left:918.20px;top:946.7px"><svg><use href="#i_receiptdollar2"/></svg><span>سجل تعميدات الصرف المستحقة</span></div><div class="card" style="left:619.20px;top:946.7px"><svg><use href="#i_docalert"/></svg><span>سجل الطلبات المالية المستحقة</span></div><div class="card" style="left:320.20px;top:946.7px"><svg><use href="#i_shieldcheck"/></svg><span>تسوية عهدة موظف</span></div><div class="card" style="left:21.20px;top:946.7px"><svg><use href="#i_shieldsearch"/></svg><span>سجل عهد الموظفين</span></div><div class="card" style="left:1815.20px;top:1067.2px"><svg><use href="#i_cashx"/></svg><span>سندات الصرف المرفوضة</span></div><div class="bar" style="top:1191.2px"><span>إدارة الأصول</span></div><div id="side" class="abs"></div><div id="stitle" class="abs"><span>إدارة الشئون المالية</span></div><svg class="abs" style="left:2134px;top:68px;width:18px;height:12px" viewBox="0 0 18 12"><path d="M1.5 10 L9 2.5 L16.5 10" stroke="#fff" stroke-width="2.4" fill="none"/></svg><svg class="abs" style="left:2324px;top:64px;width:23px;height:20px" viewBox="0 0 23 20"><rect x="1" y="1" width="21" height="16" rx="2" fill="none" stroke="#fff" stroke-width="1.4"/><circle cx="9" cy="9" r="5" fill="none" stroke="#fff" stroke-width="1.4"/><circle cx="9" cy="9" r="1.8" fill="none" stroke="#fff" stroke-width="1.2"/><circle cx="17.5" cy="7" r="1.7" fill="#fff"/><rect x="16.8" y="8" width="1.4" height="5" fill="#fff"/><path d="M4 17 v2 M19 17 v2" stroke="#fff" stroke-width="1.4"/></svg><div class="sbtn" style="top:96.1px"><span>إدارة النظام المحاسبي</span></div><div class="sline" style="top:136.0px;height:396.1px"></div><div class="sitem" style="top:142.0px"><svg><use href="#i_bankgear"/></svg><span>إعدادات النظام المحاسبي</span></div><div class="sitem" style="top:178.1px"><svg><use href="#i_bankuser"/></svg><span>إدارة حسابات البنوك</span></div><div class="sitem" style="top:214.3px"><svg><use href="#i_tree"/></svg><span>إدارة الدليل المحاسبي</span></div><div class="sitem" style="top:250.4px"><svg><use href="#i_treegear"/></svg><span>عمليات الدليل المحاسبي</span></div><div class="sitem" style="top:286.6px"><svg><use href="#i_arrowuser"/></svg><span>إدارة مراكز التكلفة</span></div><div class="sitem" style="top:322.7px"><svg><use href="#i_arrowgear"/></svg><span>عمليات مراكز التكلفة</span></div><div class="sitem" style="top:358.8px"><svg><use href="#i_ledgerplus"/></svg><span>إضافة قيد يومية</span></div><div class="sitem" style="top:395.0px"><svg><use href="#i_ledgerpen"/></svg><span>إدارة قيود اليومية</span></div><div class="sitem" style="top:431.1px"><svg><use href="#i_renum"/></svg><span>إعادة ترقيم القيود</span></div><div class="sitem" style="top:467.3px"><svg><use href="#i_lock"/></svg><span>إقفال السنة المالية</span></div><div class="sitem" style="top:503.4px"><svg><use href="#i_bankplus"/></svg><span>فتح سنة مالية جديدة</span></div><div class="sbtn" style="top:537.5px"><span>إدارة التبرعات النقدية</span></div><div class="sline" style="top:577.4px;height:107.0px"></div><div class="sitem" style="top:583.4px"><svg><use href="#i_cashheart"/></svg><span>تحصيل تبرع عام</span></div><div class="sitem" style="top:619.5px"><svg><use href="#i_bag"/></svg><span>تحصيل تبرع لمشروع</span></div><div class="sitem" style="top:655.7px"><svg><use href="#i_cashslot"/></svg><span>تحصيل تبرع لبرنامج</span></div><div class="sbtn" style="top:689.8px"><span>إدارة المقبوضات النقدية</span></div><div class="sline" style="top:729.7px;height:359.9px"></div><div class="sitem" style="top:735.7px"><svg><use href="#i_coinin"/></svg><span>إصدار سند قبض عام</span></div><div class="sitem" style="top:771.8px"><svg><use href="#i_handcoin"/></svg><span>تحصيل اشتراك جمعية</span></div><div class="sitem" style="top:808.0px"><svg><use href="#i_cashdown"/></svg><span>تسجيل ايراد مشروع</span></div><div class="sitem" style="top:844.1px"><svg><use href="#i_coinsorange"/></svg><span>تسجيل ايراد استثمار</span></div><div class="sitem" style="top:880.3px"><svg><use href="#i_redbar"/></svg><span>تسجيل ايراد متنوع</span></div><div class="sitem" style="top:916.4px"><svg><use href="#i_coinstack"/></svg><span>تحصيل قسط مشروع تأهيلي</span></div><div class="sitem" style="top:952.5px"><svg><use href="#i_personcash"/></svg><span>تحصيل رصيد داعم</span></div><div class="sitem" style="top:988.7px"><svg><use href="#i_cash"/></svg><span>إشعار مدين</span></div><div class="sitem" style="top:1024.8px"><svg><use href="#i_cashcoin"/></svg><span>إشعار دائن</span></div><div class="sitem" style="top:1061.0px"><svg><use href="#i_receiptx"/></svg><span>سندات القبض المرفوضة</span></div><div class="sbtn" style="top:1095.0px"><span>إدارة المصروفات النقدية</span></div><div class="sline" style="top:1134.9px;height:65.1px"></div><div class="sitem" style="top:1140.9px"><svg><use href="#i_cashdollar"/></svg><span>إصدار سند صرف عام</span></div><div class="sitem" style="top:1177.0px"><svg><use href="#i_receiptdollar"/></svg><span>صرف تعميد بالصرف</span></div><div class="sitem" style="top:1213.2px"><svg><use href="#i_docdollar"/></svg><span>صرف طلب إداري مالي</span></div><div id="bstrip" class="abs"></div><div class="abs" style="left:0;top:1185px;width:11px;height:10px;background:radial-gradient(circle at 100% 0, rgba(156,189,212,0) 9.5px, #9cbdd4 10.5px)"></div><div class="abs" style="left:2349px;top:1186px;width:10px;height:9px;background:radial-gradient(circle at 0 0, rgba(156,189,212,0) 8.5px, #9cbdd4 9.5px)"></div></div></body></html>
